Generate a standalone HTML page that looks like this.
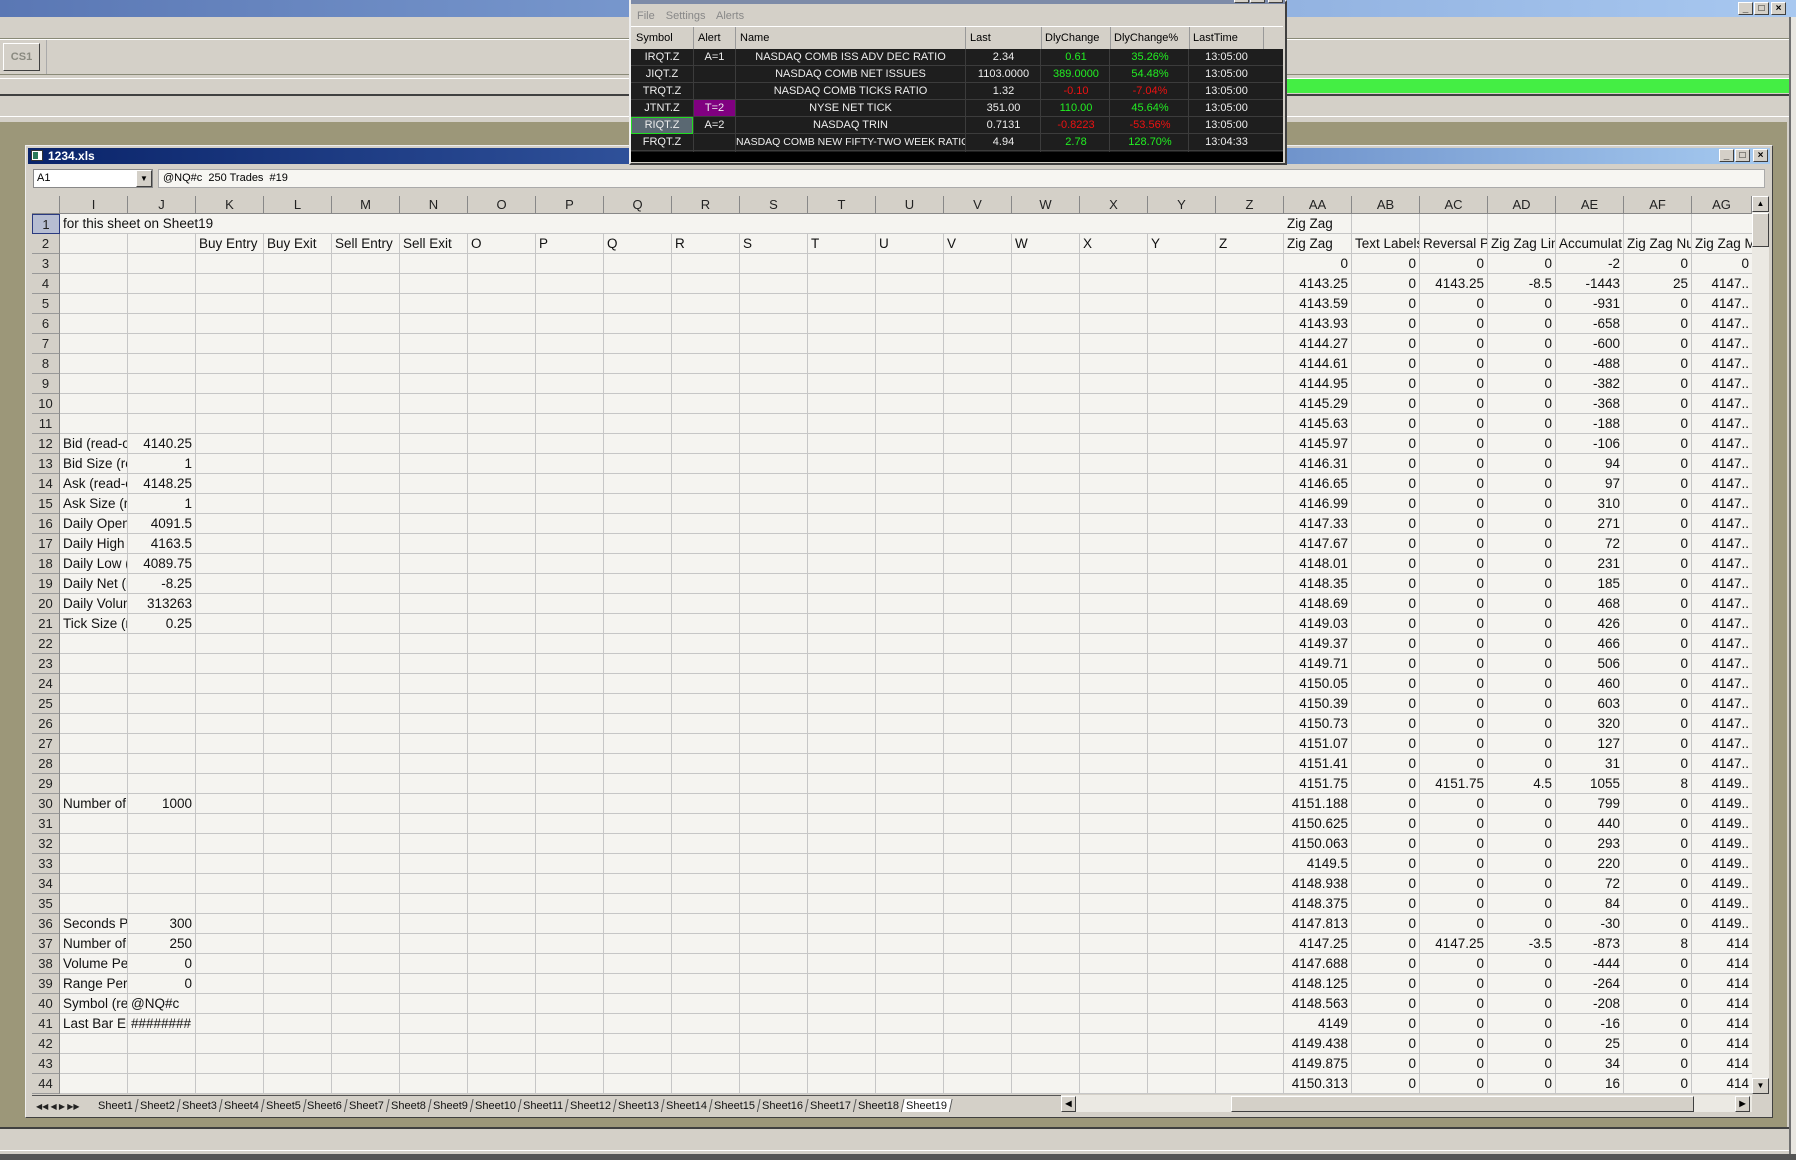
<!DOCTYPE html>
<html><head><meta charset="utf-8"><style>
*{margin:0;padding:0;box-sizing:border-box}
body{width:1796px;height:1160px;position:relative;overflow:hidden;background:#d4d0c8;font-family:"Liberation Sans",sans-serif}
.a{position:absolute}
.ui{font-family:"Liberation Sans",sans-serif;font-size:11px}
.btn3{position:absolute;width:15px;height:13px;background:#d4d0c8;border:1px solid;border-color:#fff #404040 #404040 #fff;font-size:10px;line-height:11px;text-align:center;color:#000;font-weight:bold}
#grid{position:absolute;left:60px;top:214px;width:1692px;height:880px;background-color:#f5f4f0;
background-image:linear-gradient(to right,transparent 67px,#c6c6c6 67px),linear-gradient(to bottom,transparent 19px,#c6c6c6 19px);
background-size:68px 20px,68px 20px;overflow:hidden}
.c{position:absolute;height:20px;line-height:20px;font-size:13.5px;color:#111;padding:0 3px;white-space:nowrap;overflow:hidden;width:67px}
.n{text-align:right}
.ov{overflow:visible;width:auto}
.ch{position:absolute;top:196px;height:18px;width:68px;background:#d4d0c8;border-right:1px solid #888;border-bottom:1px solid #888;text-align:center;font-size:13px;line-height:18px;color:#222}
.rh{position:absolute;left:32px;width:28px;height:20px;background:#d4d0c8;border-bottom:1px solid #999;border-right:1px solid #888;text-align:center;font-size:13px;line-height:20px;color:#222}
.tab{display:inline-block;font-size:11px;line-height:15px;padding:0 3px;border-right:1px solid #555;color:#111;transform:skewX(-12deg)}
.tab span{display:inline-block;transform:skewX(12deg)}
.q{position:absolute;height:17px;line-height:17px;font-size:11px;color:#eee;text-align:center;white-space:nowrap;overflow:hidden}
.g{color:#22ee22}.rd{color:#ee1111}
</style></head><body>
<!-- top desktop title bar -->
<div class="a" style="left:0;top:0;width:1796px;height:17px;background:linear-gradient(to right,#5a77b4,#7b9bd0 40%,#a8c8f0)"></div>
<div class="btn3" style="left:1738px;top:2px">_</div>
<div class="btn3" style="left:1754px;top:2px">□</div>
<div class="btn3" style="left:1771px;top:2px">×</div>
<div class="a" style="left:0;top:38px;width:1789px;height:1px;background:#8a8a78"></div>
<div class="a" style="left:0;top:39px;width:1789px;height:1px;background:#fff"></div>
<div class="a" style="left:3px;top:43px;width:37px;height:28px;border:1px solid;border-color:#fff #404040 #404040 #fff;background:#d4d0c8;font-size:11px;font-weight:bold;color:#8a8a80;text-align:center;line-height:26px">CS1</div>
<div class="a" style="left:46px;top:40px;width:1px;height:34px;background:#aaa"></div>
<div class="a" style="left:0;top:74px;width:1789px;height:1px;background:#8a8a78"></div>
<div class="a" style="left:0;top:78px;width:1789px;height:1px;background:#fff"></div>
<div class="a" style="left:1287px;top:79px;width:502px;height:14px;background:#44ee44"></div>
<div class="a" style="left:0;top:94px;width:1789px;height:2px;background:#404040"></div>
<div class="a" style="left:0;top:116px;width:1789px;height:1px;background:#fff"></div>
<div class="a" style="left:0;top:122px;width:1787px;height:1005px;background:#9c9779"></div>
<div class="a" style="left:1789px;top:17px;width:7px;height:1143px;background:#e8e6e0;border-left:2px solid #707070"></div>
<div class="a" style="left:0;top:1127px;width:1789px;height:2px;background:#404040"></div>
<div class="a" style="left:0;top:1150px;width:1789px;height:1px;background:#fff"></div>
<div class="a" style="left:0;top:1154px;width:1796px;height:6px;background:#555"></div>

<!-- excel window -->
<div class="a" style="left:25px;top:145px;width:1748px;height:973px;background:#d4d0c8;border:1px solid;border-color:#eee #404040 #404040 #eee"></div>
<div class="a" style="left:28px;top:148px;width:1742px;height:16px;background:linear-gradient(to right,#0a246a,#3a5ea8 45%,#a6caf0)"></div>
<div class="a" style="left:31px;top:150px;width:12px;height:11px;background:#fff;border:1px solid #333"><div class="a" style="left:1px;top:1px;width:5px;height:7px;background:#2a7a5a"></div></div>
<div class="a" style="left:48px;top:148px;font-size:12px;font-weight:bold;color:#fff;line-height:16px">1234.xls</div>
<div class="btn3" style="left:1719px;top:149px">_</div>
<div class="btn3" style="left:1735px;top:149px">□</div>
<div class="btn3" style="left:1753px;top:149px">×</div>
<div class="a" style="left:33px;top:169px;width:120px;height:19px;background:#fff;border:1px solid #888;font-size:11px;line-height:17px;padding-left:3px">A1</div>
<div class="a" style="left:136px;top:170px;width:16px;height:17px;background:#d4d0c8;border:1px solid;border-color:#fff #404040 #404040 #fff;font-size:8px;text-align:center;line-height:15px">▼</div>
<div class="a" style="left:158px;top:169px;width:1607px;height:19px;background:#f7f6f2;border:1px solid #aaa;font-size:11px;line-height:17px;padding-left:4px">@NQ#c&nbsp; 250 Trades&nbsp; #19</div>

<!-- column headers -->
<div class="a" style="left:32px;top:196px;width:28px;height:18px;background:#d4d0c8;border-right:1px solid #888;border-bottom:1px solid #888"></div>
<div class="ch" style="left:60px">I</div><div class="ch" style="left:128px">J</div><div class="ch" style="left:196px">K</div><div class="ch" style="left:264px">L</div><div class="ch" style="left:332px">M</div><div class="ch" style="left:400px">N</div><div class="ch" style="left:468px">O</div><div class="ch" style="left:536px">P</div><div class="ch" style="left:604px">Q</div><div class="ch" style="left:672px">R</div><div class="ch" style="left:740px">S</div><div class="ch" style="left:808px">T</div><div class="ch" style="left:876px">U</div><div class="ch" style="left:944px">V</div><div class="ch" style="left:1012px">W</div><div class="ch" style="left:1080px">X</div><div class="ch" style="left:1148px">Y</div><div class="ch" style="left:1216px">Z</div><div class="ch" style="left:1284px">AA</div><div class="ch" style="left:1352px">AB</div><div class="ch" style="left:1420px">AC</div><div class="ch" style="left:1488px">AD</div><div class="ch" style="left:1556px">AE</div><div class="ch" style="left:1624px">AF</div><div class="ch" style="left:1692px;width:60px">AG</div>

<!-- row headers -->
<div class="rh" style="top:214px;background:#b6bdd2;border:1px solid #2a3a80">1</div>
<div class="rh" style="top:234px">2</div><div class="rh" style="top:254px">3</div><div class="rh" style="top:274px">4</div><div class="rh" style="top:294px">5</div><div class="rh" style="top:314px">6</div><div class="rh" style="top:334px">7</div><div class="rh" style="top:354px">8</div><div class="rh" style="top:374px">9</div><div class="rh" style="top:394px">10</div><div class="rh" style="top:414px">11</div><div class="rh" style="top:434px">12</div><div class="rh" style="top:454px">13</div><div class="rh" style="top:474px">14</div><div class="rh" style="top:494px">15</div><div class="rh" style="top:514px">16</div><div class="rh" style="top:534px">17</div><div class="rh" style="top:554px">18</div><div class="rh" style="top:574px">19</div><div class="rh" style="top:594px">20</div><div class="rh" style="top:614px">21</div><div class="rh" style="top:634px">22</div><div class="rh" style="top:654px">23</div><div class="rh" style="top:674px">24</div><div class="rh" style="top:694px">25</div><div class="rh" style="top:714px">26</div><div class="rh" style="top:734px">27</div><div class="rh" style="top:754px">28</div><div class="rh" style="top:774px">29</div><div class="rh" style="top:794px">30</div><div class="rh" style="top:814px">31</div><div class="rh" style="top:834px">32</div><div class="rh" style="top:854px">33</div><div class="rh" style="top:874px">34</div><div class="rh" style="top:894px">35</div><div class="rh" style="top:914px">36</div><div class="rh" style="top:934px">37</div><div class="rh" style="top:954px">38</div><div class="rh" style="top:974px">39</div><div class="rh" style="top:994px">40</div><div class="rh" style="top:1014px">41</div><div class="rh" style="top:1034px">42</div><div class="rh" style="top:1054px">43</div><div class="rh" style="top:1074px">44</div>

<div id="grid">
<div class="a" style="left:0;top:0;width:1224px;height:19px;background:#f5f4f0"></div>
<div class="c ov" style="top:0;left:0">for this sheet on Sheet19</div>
<div class="c ov" style="top:0;left:1224px">Zig Zag</div>
<div class="c" style="top:20px;left:136px">Buy Entry</div><div class="c" style="top:20px;left:204px">Buy Exit</div><div class="c" style="top:20px;left:272px">Sell Entry</div><div class="c" style="top:20px;left:340px">Sell Exit</div>
<div class="c" style="top:20px;left:408px">O</div><div class="c" style="top:20px;left:476px">P</div><div class="c" style="top:20px;left:544px">Q</div><div class="c" style="top:20px;left:612px">R</div><div class="c" style="top:20px;left:680px">S</div><div class="c" style="top:20px;left:748px">T</div><div class="c" style="top:20px;left:816px">U</div><div class="c" style="top:20px;left:884px">V</div><div class="c" style="top:20px;left:952px">W</div><div class="c" style="top:20px;left:1020px">X</div><div class="c" style="top:20px;left:1088px">Y</div><div class="c" style="top:20px;left:1156px">Z</div>
<div class="c" style="top:20px;left:1224px">Zig Zag</div><div class="c" style="top:20px;left:1292px">Text Labels</div><div class="c" style="top:20px;left:1360px">Reversal Pr</div><div class="c" style="top:20px;left:1428px">Zig Zag Line</div><div class="c" style="top:20px;left:1496px">Accumulat</div><div class="c" style="top:20px;left:1564px">Zig Zag Nu</div><div class="c" style="top:20px;left:1632px">Zig Zag Ma</div>
<!-- left labels -->
<div class="c" style="top:220px;left:0">Bid (read-only)</div><div class="c n" style="top:220px;left:68px">4140.25</div>
<div class="c" style="top:240px;left:0">Bid Size (read)</div><div class="c n" style="top:240px;left:68px">1</div>
<div class="c" style="top:260px;left:0">Ask (read-only)</div><div class="c n" style="top:260px;left:68px">4148.25</div>
<div class="c" style="top:280px;left:0">Ask Size (read)</div><div class="c n" style="top:280px;left:68px">1</div>
<div class="c" style="top:300px;left:0">Daily Open</div><div class="c n" style="top:300px;left:68px">4091.5</div>
<div class="c" style="top:320px;left:0">Daily High (</div><div class="c n" style="top:320px;left:68px">4163.5</div>
<div class="c" style="top:340px;left:0">Daily Low (r</div><div class="c n" style="top:340px;left:68px">4089.75</div>
<div class="c" style="top:360px;left:0">Daily Net (r</div><div class="c n" style="top:360px;left:68px">-8.25</div>
<div class="c" style="top:380px;left:0">Daily Volume</div><div class="c n" style="top:380px;left:68px">313263</div>
<div class="c" style="top:400px;left:0">Tick Size (r</div><div class="c n" style="top:400px;left:68px">0.25</div>
<div class="c" style="top:580px;left:0">Number of</div><div class="c n" style="top:580px;left:68px">1000</div>
<div class="c" style="top:700px;left:0">Seconds Per</div><div class="c n" style="top:700px;left:68px">300</div>
<div class="c" style="top:720px;left:0">Number of</div><div class="c n" style="top:720px;left:68px">250</div>
<div class="c" style="top:740px;left:0">Volume Per</div><div class="c n" style="top:740px;left:68px">0</div>
<div class="c" style="top:760px;left:0">Range Per</div><div class="c n" style="top:760px;left:68px">0</div>
<div class="c" style="top:780px;left:0">Symbol (read</div><div class="c" style="top:780px;left:68px">@NQ#c</div>
<div class="c" style="top:800px;left:0">Last Bar End</div><div class="c" style="top:800px;left:68px">########</div>
<!-- right data: AA 1224, AB 1292, AC 1360, AD 1428, AE 1496, AF 1564, AG 1632 -->
<div class="c n" style="top:40px;left:1224px">0</div><div class="c n" style="top:40px;left:1292px">0</div><div class="c n" style="top:40px;left:1360px">0</div><div class="c n" style="top:40px;left:1428px">0</div><div class="c n" style="top:40px;left:1496px">-2</div><div class="c n" style="top:40px;left:1564px">0</div><div class="c n" style="top:40px;left:1632px;width:60px">0</div>
<div class="c n" style="top:60px;left:1224px">4143.25</div><div class="c n" style="top:60px;left:1292px">0</div><div class="c n" style="top:60px;left:1360px">4143.25</div><div class="c n" style="top:60px;left:1428px">-8.5</div><div class="c n" style="top:60px;left:1496px">-1443</div><div class="c n" style="top:60px;left:1564px">25</div><div class="c n" style="top:60px;left:1632px;width:60px">4147..</div>
<div class="c n" style="top:80px;left:1224px">4143.59</div><div class="c n" style="top:80px;left:1292px">0</div><div class="c n" style="top:80px;left:1360px">0</div><div class="c n" style="top:80px;left:1428px">0</div><div class="c n" style="top:80px;left:1496px">-931</div><div class="c n" style="top:80px;left:1564px">0</div><div class="c n" style="top:80px;left:1632px;width:60px">4147..</div>
<div class="c n" style="top:100px;left:1224px">4143.93</div><div class="c n" style="top:100px;left:1292px">0</div><div class="c n" style="top:100px;left:1360px">0</div><div class="c n" style="top:100px;left:1428px">0</div><div class="c n" style="top:100px;left:1496px">-658</div><div class="c n" style="top:100px;left:1564px">0</div><div class="c n" style="top:100px;left:1632px;width:60px">4147..</div>
<div class="c n" style="top:120px;left:1224px">4144.27</div><div class="c n" style="top:120px;left:1292px">0</div><div class="c n" style="top:120px;left:1360px">0</div><div class="c n" style="top:120px;left:1428px">0</div><div class="c n" style="top:120px;left:1496px">-600</div><div class="c n" style="top:120px;left:1564px">0</div><div class="c n" style="top:120px;left:1632px;width:60px">4147..</div>
<div class="c n" style="top:140px;left:1224px">4144.61</div><div class="c n" style="top:140px;left:1292px">0</div><div class="c n" style="top:140px;left:1360px">0</div><div class="c n" style="top:140px;left:1428px">0</div><div class="c n" style="top:140px;left:1496px">-488</div><div class="c n" style="top:140px;left:1564px">0</div><div class="c n" style="top:140px;left:1632px;width:60px">4147..</div>
<div class="c n" style="top:160px;left:1224px">4144.95</div><div class="c n" style="top:160px;left:1292px">0</div><div class="c n" style="top:160px;left:1360px">0</div><div class="c n" style="top:160px;left:1428px">0</div><div class="c n" style="top:160px;left:1496px">-382</div><div class="c n" style="top:160px;left:1564px">0</div><div class="c n" style="top:160px;left:1632px;width:60px">4147..</div>
<div class="c n" style="top:180px;left:1224px">4145.29</div><div class="c n" style="top:180px;left:1292px">0</div><div class="c n" style="top:180px;left:1360px">0</div><div class="c n" style="top:180px;left:1428px">0</div><div class="c n" style="top:180px;left:1496px">-368</div><div class="c n" style="top:180px;left:1564px">0</div><div class="c n" style="top:180px;left:1632px;width:60px">4147..</div>
<div class="c n" style="top:200px;left:1224px">4145.63</div><div class="c n" style="top:200px;left:1292px">0</div><div class="c n" style="top:200px;left:1360px">0</div><div class="c n" style="top:200px;left:1428px">0</div><div class="c n" style="top:200px;left:1496px">-188</div><div class="c n" style="top:200px;left:1564px">0</div><div class="c n" style="top:200px;left:1632px;width:60px">4147..</div>
<div class="c n" style="top:220px;left:1224px">4145.97</div><div class="c n" style="top:220px;left:1292px">0</div><div class="c n" style="top:220px;left:1360px">0</div><div class="c n" style="top:220px;left:1428px">0</div><div class="c n" style="top:220px;left:1496px">-106</div><div class="c n" style="top:220px;left:1564px">0</div><div class="c n" style="top:220px;left:1632px;width:60px">4147..</div>
<div class="c n" style="top:240px;left:1224px">4146.31</div><div class="c n" style="top:240px;left:1292px">0</div><div class="c n" style="top:240px;left:1360px">0</div><div class="c n" style="top:240px;left:1428px">0</div><div class="c n" style="top:240px;left:1496px">94</div><div class="c n" style="top:240px;left:1564px">0</div><div class="c n" style="top:240px;left:1632px;width:60px">4147..</div>
<div class="c n" style="top:260px;left:1224px">4146.65</div><div class="c n" style="top:260px;left:1292px">0</div><div class="c n" style="top:260px;left:1360px">0</div><div class="c n" style="top:260px;left:1428px">0</div><div class="c n" style="top:260px;left:1496px">97</div><div class="c n" style="top:260px;left:1564px">0</div><div class="c n" style="top:260px;left:1632px;width:60px">4147..</div>
<div class="c n" style="top:280px;left:1224px">4146.99</div><div class="c n" style="top:280px;left:1292px">0</div><div class="c n" style="top:280px;left:1360px">0</div><div class="c n" style="top:280px;left:1428px">0</div><div class="c n" style="top:280px;left:1496px">310</div><div class="c n" style="top:280px;left:1564px">0</div><div class="c n" style="top:280px;left:1632px;width:60px">4147..</div>
<div class="c n" style="top:300px;left:1224px">4147.33</div><div class="c n" style="top:300px;left:1292px">0</div><div class="c n" style="top:300px;left:1360px">0</div><div class="c n" style="top:300px;left:1428px">0</div><div class="c n" style="top:300px;left:1496px">271</div><div class="c n" style="top:300px;left:1564px">0</div><div class="c n" style="top:300px;left:1632px;width:60px">4147..</div>
<div class="c n" style="top:320px;left:1224px">4147.67</div><div class="c n" style="top:320px;left:1292px">0</div><div class="c n" style="top:320px;left:1360px">0</div><div class="c n" style="top:320px;left:1428px">0</div><div class="c n" style="top:320px;left:1496px">72</div><div class="c n" style="top:320px;left:1564px">0</div><div class="c n" style="top:320px;left:1632px;width:60px">4147..</div>
<div class="c n" style="top:340px;left:1224px">4148.01</div><div class="c n" style="top:340px;left:1292px">0</div><div class="c n" style="top:340px;left:1360px">0</div><div class="c n" style="top:340px;left:1428px">0</div><div class="c n" style="top:340px;left:1496px">231</div><div class="c n" style="top:340px;left:1564px">0</div><div class="c n" style="top:340px;left:1632px;width:60px">4147..</div>
<div class="c n" style="top:360px;left:1224px">4148.35</div><div class="c n" style="top:360px;left:1292px">0</div><div class="c n" style="top:360px;left:1360px">0</div><div class="c n" style="top:360px;left:1428px">0</div><div class="c n" style="top:360px;left:1496px">185</div><div class="c n" style="top:360px;left:1564px">0</div><div class="c n" style="top:360px;left:1632px;width:60px">4147..</div>
<div class="c n" style="top:380px;left:1224px">4148.69</div><div class="c n" style="top:380px;left:1292px">0</div><div class="c n" style="top:380px;left:1360px">0</div><div class="c n" style="top:380px;left:1428px">0</div><div class="c n" style="top:380px;left:1496px">468</div><div class="c n" style="top:380px;left:1564px">0</div><div class="c n" style="top:380px;left:1632px;width:60px">4147..</div>
<div class="c n" style="top:400px;left:1224px">4149.03</div><div class="c n" style="top:400px;left:1292px">0</div><div class="c n" style="top:400px;left:1360px">0</div><div class="c n" style="top:400px;left:1428px">0</div><div class="c n" style="top:400px;left:1496px">426</div><div class="c n" style="top:400px;left:1564px">0</div><div class="c n" style="top:400px;left:1632px;width:60px">4147..</div>
<div class="c n" style="top:420px;left:1224px">4149.37</div><div class="c n" style="top:420px;left:1292px">0</div><div class="c n" style="top:420px;left:1360px">0</div><div class="c n" style="top:420px;left:1428px">0</div><div class="c n" style="top:420px;left:1496px">466</div><div class="c n" style="top:420px;left:1564px">0</div><div class="c n" style="top:420px;left:1632px;width:60px">4147..</div>
<div class="c n" style="top:440px;left:1224px">4149.71</div><div class="c n" style="top:440px;left:1292px">0</div><div class="c n" style="top:440px;left:1360px">0</div><div class="c n" style="top:440px;left:1428px">0</div><div class="c n" style="top:440px;left:1496px">506</div><div class="c n" style="top:440px;left:1564px">0</div><div class="c n" style="top:440px;left:1632px;width:60px">4147..</div>
<div class="c n" style="top:460px;left:1224px">4150.05</div><div class="c n" style="top:460px;left:1292px">0</div><div class="c n" style="top:460px;left:1360px">0</div><div class="c n" style="top:460px;left:1428px">0</div><div class="c n" style="top:460px;left:1496px">460</div><div class="c n" style="top:460px;left:1564px">0</div><div class="c n" style="top:460px;left:1632px;width:60px">4147..</div>
<div class="c n" style="top:480px;left:1224px">4150.39</div><div class="c n" style="top:480px;left:1292px">0</div><div class="c n" style="top:480px;left:1360px">0</div><div class="c n" style="top:480px;left:1428px">0</div><div class="c n" style="top:480px;left:1496px">603</div><div class="c n" style="top:480px;left:1564px">0</div><div class="c n" style="top:480px;left:1632px;width:60px">4147..</div>
<div class="c n" style="top:500px;left:1224px">4150.73</div><div class="c n" style="top:500px;left:1292px">0</div><div class="c n" style="top:500px;left:1360px">0</div><div class="c n" style="top:500px;left:1428px">0</div><div class="c n" style="top:500px;left:1496px">320</div><div class="c n" style="top:500px;left:1564px">0</div><div class="c n" style="top:500px;left:1632px;width:60px">4147..</div>
<div class="c n" style="top:520px;left:1224px">4151.07</div><div class="c n" style="top:520px;left:1292px">0</div><div class="c n" style="top:520px;left:1360px">0</div><div class="c n" style="top:520px;left:1428px">0</div><div class="c n" style="top:520px;left:1496px">127</div><div class="c n" style="top:520px;left:1564px">0</div><div class="c n" style="top:520px;left:1632px;width:60px">4147..</div>
<div class="c n" style="top:540px;left:1224px">4151.41</div><div class="c n" style="top:540px;left:1292px">0</div><div class="c n" style="top:540px;left:1360px">0</div><div class="c n" style="top:540px;left:1428px">0</div><div class="c n" style="top:540px;left:1496px">31</div><div class="c n" style="top:540px;left:1564px">0</div><div class="c n" style="top:540px;left:1632px;width:60px">4147..</div>
<div class="c n" style="top:560px;left:1224px">4151.75</div><div class="c n" style="top:560px;left:1292px">0</div><div class="c n" style="top:560px;left:1360px">4151.75</div><div class="c n" style="top:560px;left:1428px">4.5</div><div class="c n" style="top:560px;left:1496px">1055</div><div class="c n" style="top:560px;left:1564px">8</div><div class="c n" style="top:560px;left:1632px;width:60px">4149..</div>
<div class="c n" style="top:580px;left:1224px">4151.188</div><div class="c n" style="top:580px;left:1292px">0</div><div class="c n" style="top:580px;left:1360px">0</div><div class="c n" style="top:580px;left:1428px">0</div><div class="c n" style="top:580px;left:1496px">799</div><div class="c n" style="top:580px;left:1564px">0</div><div class="c n" style="top:580px;left:1632px;width:60px">4149..</div>
<div class="c n" style="top:600px;left:1224px">4150.625</div><div class="c n" style="top:600px;left:1292px">0</div><div class="c n" style="top:600px;left:1360px">0</div><div class="c n" style="top:600px;left:1428px">0</div><div class="c n" style="top:600px;left:1496px">440</div><div class="c n" style="top:600px;left:1564px">0</div><div class="c n" style="top:600px;left:1632px;width:60px">4149..</div>
<div class="c n" style="top:620px;left:1224px">4150.063</div><div class="c n" style="top:620px;left:1292px">0</div><div class="c n" style="top:620px;left:1360px">0</div><div class="c n" style="top:620px;left:1428px">0</div><div class="c n" style="top:620px;left:1496px">293</div><div class="c n" style="top:620px;left:1564px">0</div><div class="c n" style="top:620px;left:1632px;width:60px">4149..</div>
<div class="c n" style="top:640px;left:1224px">4149.5</div><div class="c n" style="top:640px;left:1292px">0</div><div class="c n" style="top:640px;left:1360px">0</div><div class="c n" style="top:640px;left:1428px">0</div><div class="c n" style="top:640px;left:1496px">220</div><div class="c n" style="top:640px;left:1564px">0</div><div class="c n" style="top:640px;left:1632px;width:60px">4149..</div>
<div class="c n" style="top:660px;left:1224px">4148.938</div><div class="c n" style="top:660px;left:1292px">0</div><div class="c n" style="top:660px;left:1360px">0</div><div class="c n" style="top:660px;left:1428px">0</div><div class="c n" style="top:660px;left:1496px">72</div><div class="c n" style="top:660px;left:1564px">0</div><div class="c n" style="top:660px;left:1632px;width:60px">4149..</div>
<div class="c n" style="top:680px;left:1224px">4148.375</div><div class="c n" style="top:680px;left:1292px">0</div><div class="c n" style="top:680px;left:1360px">0</div><div class="c n" style="top:680px;left:1428px">0</div><div class="c n" style="top:680px;left:1496px">84</div><div class="c n" style="top:680px;left:1564px">0</div><div class="c n" style="top:680px;left:1632px;width:60px">4149..</div>
<div class="c n" style="top:700px;left:1224px">4147.813</div><div class="c n" style="top:700px;left:1292px">0</div><div class="c n" style="top:700px;left:1360px">0</div><div class="c n" style="top:700px;left:1428px">0</div><div class="c n" style="top:700px;left:1496px">-30</div><div class="c n" style="top:700px;left:1564px">0</div><div class="c n" style="top:700px;left:1632px;width:60px">4149..</div>
<div class="c n" style="top:720px;left:1224px">4147.25</div><div class="c n" style="top:720px;left:1292px">0</div><div class="c n" style="top:720px;left:1360px">4147.25</div><div class="c n" style="top:720px;left:1428px">-3.5</div><div class="c n" style="top:720px;left:1496px">-873</div><div class="c n" style="top:720px;left:1564px">8</div><div class="c n" style="top:720px;left:1632px;width:60px">414</div>
<div class="c n" style="top:740px;left:1224px">4147.688</div><div class="c n" style="top:740px;left:1292px">0</div><div class="c n" style="top:740px;left:1360px">0</div><div class="c n" style="top:740px;left:1428px">0</div><div class="c n" style="top:740px;left:1496px">-444</div><div class="c n" style="top:740px;left:1564px">0</div><div class="c n" style="top:740px;left:1632px;width:60px">414</div>
<div class="c n" style="top:760px;left:1224px">4148.125</div><div class="c n" style="top:760px;left:1292px">0</div><div class="c n" style="top:760px;left:1360px">0</div><div class="c n" style="top:760px;left:1428px">0</div><div class="c n" style="top:760px;left:1496px">-264</div><div class="c n" style="top:760px;left:1564px">0</div><div class="c n" style="top:760px;left:1632px;width:60px">414</div>
<div class="c n" style="top:780px;left:1224px">4148.563</div><div class="c n" style="top:780px;left:1292px">0</div><div class="c n" style="top:780px;left:1360px">0</div><div class="c n" style="top:780px;left:1428px">0</div><div class="c n" style="top:780px;left:1496px">-208</div><div class="c n" style="top:780px;left:1564px">0</div><div class="c n" style="top:780px;left:1632px;width:60px">414</div>
<div class="c n" style="top:800px;left:1224px">4149</div><div class="c n" style="top:800px;left:1292px">0</div><div class="c n" style="top:800px;left:1360px">0</div><div class="c n" style="top:800px;left:1428px">0</div><div class="c n" style="top:800px;left:1496px">-16</div><div class="c n" style="top:800px;left:1564px">0</div><div class="c n" style="top:800px;left:1632px;width:60px">414</div>
<div class="c n" style="top:820px;left:1224px">4149.438</div><div class="c n" style="top:820px;left:1292px">0</div><div class="c n" style="top:820px;left:1360px">0</div><div class="c n" style="top:820px;left:1428px">0</div><div class="c n" style="top:820px;left:1496px">25</div><div class="c n" style="top:820px;left:1564px">0</div><div class="c n" style="top:820px;left:1632px;width:60px">414</div>
<div class="c n" style="top:840px;left:1224px">4149.875</div><div class="c n" style="top:840px;left:1292px">0</div><div class="c n" style="top:840px;left:1360px">0</div><div class="c n" style="top:840px;left:1428px">0</div><div class="c n" style="top:840px;left:1496px">34</div><div class="c n" style="top:840px;left:1564px">0</div><div class="c n" style="top:840px;left:1632px;width:60px">414</div>
<div class="c n" style="top:860px;left:1224px">4150.313</div><div class="c n" style="top:860px;left:1292px">0</div><div class="c n" style="top:860px;left:1360px">0</div><div class="c n" style="top:860px;left:1428px">0</div><div class="c n" style="top:860px;left:1496px">16</div><div class="c n" style="top:860px;left:1564px">0</div><div class="c n" style="top:860px;left:1632px;width:60px">414</div>
</div>
<!-- vertical scrollbar -->
<div class="a" style="left:1752px;top:196px;width:17px;height:898px;background:#ebe9e3"></div>
<div class="btn3" style="left:1752px;top:196px;width:17px;height:16px;font-size:8px;line-height:13px">▲</div>
<div class="a" style="left:1752px;top:213px;width:17px;height:34px;background:#d4d0c8;border:1px solid;border-color:#fff #404040 #404040 #fff"></div>
<div class="btn3" style="left:1752px;top:1078px;width:17px;height:16px;font-size:8px;line-height:13px">▼</div>
<!-- sheet tabs -->
<div class="a" style="left:32px;top:1095px;width:1034px;height:17px;background:#d4d0c8;border-top:1px solid #555;white-space:nowrap;overflow:hidden">
<span style="display:inline-block;width:63px;font-size:8px;line-height:15px;padding-left:4px;color:#222">&#9664;&#9664; &#9664; &#9654; &#9654;&#9654;</span><span class="tab"><span>Sheet1</span></span><span class="tab"><span>Sheet2</span></span><span class="tab"><span>Sheet3</span></span><span class="tab"><span>Sheet4</span></span><span class="tab"><span>Sheet5</span></span><span class="tab"><span>Sheet6</span></span><span class="tab"><span>Sheet7</span></span><span class="tab"><span>Sheet8</span></span><span class="tab"><span>Sheet9</span></span><span class="tab"><span>Sheet10</span></span><span class="tab"><span>Sheet11</span></span><span class="tab"><span>Sheet12</span></span><span class="tab"><span>Sheet13</span></span><span class="tab"><span>Sheet14</span></span><span class="tab"><span>Sheet15</span></span><span class="tab"><span>Sheet16</span></span><span class="tab"><span>Sheet17</span></span><span class="tab"><span>Sheet18</span></span><span class="tab" style="background:#fff"><span>Sheet19</span></span>
</div>
<div class="a" style="left:1061px;top:1095px;width:691px;height:17px;background:#ebe9e3"></div>
<div class="btn3" style="left:1061px;top:1096px;height:16px;font-size:8px;line-height:13px">◀</div>
<div class="a" style="left:1231px;top:1096px;width:463px;height:16px;background:#d4d0c8;border:1px solid;border-color:#fff #404040 #404040 #fff"></div>
<div class="btn3" style="left:1735px;top:1096px;height:16px;font-size:8px;line-height:13px">▶</div>

<!-- quote window -->
<div class="a" style="left:629px;top:0;width:658px;height:165px;background:#d4d0c8;border:2px solid;border-color:#eee #404040 #404040 #eee"></div>
<div class="a" style="left:631px;top:0;width:654px;height:4px;background:#7d8ba8"></div>
<div class="btn3" style="left:1234px;top:-9px;height:12px"></div><div class="btn3" style="left:1250px;top:-9px;height:12px"></div><div class="btn3" style="left:1268px;top:-9px;height:12px"></div>
<div class="a ui" style="left:637px;top:9px;color:#888;line-height:14px;word-spacing:8px">File Settings Alerts</div>
<div class="a" style="left:631px;top:26px;width:652px;height:1px;background:#fff"></div>
<div class="a" style="left:631px;top:27px;width:652px;height:22px;background:#d4d0c8"></div>
<div class="a ui" style="left:636px;top:31px;line-height:14px">Symbol</div>
<div class="a ui" style="left:698px;top:31px;line-height:14px">Alert</div>
<div class="a ui" style="left:740px;top:31px;line-height:14px">Name</div>
<div class="a ui" style="left:970px;top:31px;line-height:14px">Last</div>
<div class="a ui" style="left:1045px;top:31px;line-height:14px">DlyChange</div>
<div class="a ui" style="left:1114px;top:31px;line-height:14px">DlyChange%</div>
<div class="a ui" style="left:1193px;top:31px;line-height:14px">LastTime</div>
<div class="a" style="left:693px;top:27px;width:1px;height:22px;background:#999"></div><div class="a" style="left:735px;top:27px;width:1px;height:22px;background:#999"></div><div class="a" style="left:965px;top:27px;width:1px;height:22px;background:#999"></div><div class="a" style="left:1041px;top:27px;width:1px;height:22px;background:#999"></div><div class="a" style="left:1110px;top:27px;width:1px;height:22px;background:#999"></div><div class="a" style="left:1189px;top:27px;width:1px;height:22px;background:#999"></div><div class="a" style="left:1263px;top:27px;width:1px;height:22px;background:#999"></div>
<div class="a" style="left:631px;top:49px;width:652px;height:113px;background:#000"></div>
<div class="a" style="left:631px;top:49px;width:652px;height:103px;background:#1e1e1e;
background-image:linear-gradient(to bottom,transparent 16px,#3c3c3c 16px),linear-gradient(to right,transparent 62px,#3c3c3c 62px,#3c3c3c 63px,transparent 63px,transparent 104px,#3c3c3c 104px,#3c3c3c 105px,transparent 105px,transparent 334px,#3c3c3c 334px,#3c3c3c 335px,transparent 335px,transparent 409px,#3c3c3c 409px,#3c3c3c 410px,transparent 410px,transparent 478px,#3c3c3c 478px,#3c3c3c 479px,transparent 479px,transparent 557px,#3c3c3c 557px,#3c3c3c 558px,transparent 558px);background-size:652px 17px,652px 103px;background-repeat:repeat-y,no-repeat"></div>
<div class="a" style="left:694px;top:100px;width:41px;height:16px;background:#800080"></div>
<div class="a" style="left:631px;top:117px;width:62px;height:17px;background:#5a6872;border:1px solid #22dd22"></div>
<div class="q" style="left:631px;top:49px;width:62px">IRQT.Z</div><div class="q" style="left:694px;top:49px;width:41px">A=1</div><div class="q" style="left:736px;top:49px;width:229px">NASDAQ COMB ISS ADV DEC RATIO</div><div class="q" style="left:966px;top:49px;width:75px">2.34</div><div class="q g" style="left:1042px;top:49px;width:68px">0.61</div><div class="q g" style="left:1111px;top:49px;width:78px">35.26%</div><div class="q" style="left:1190px;top:49px;width:73px">13:05:00</div>
<div class="q" style="left:631px;top:66px;width:62px">JIQT.Z</div><div class="q" style="left:736px;top:66px;width:229px">NASDAQ COMB NET ISSUES</div><div class="q" style="left:966px;top:66px;width:75px">1103.0000</div><div class="q g" style="left:1042px;top:66px;width:68px">389.0000</div><div class="q g" style="left:1111px;top:66px;width:78px">54.48%</div><div class="q" style="left:1190px;top:66px;width:73px">13:05:00</div>
<div class="q" style="left:631px;top:83px;width:62px">TRQT.Z</div><div class="q" style="left:736px;top:83px;width:229px">NASDAQ COMB TICKS RATIO</div><div class="q" style="left:966px;top:83px;width:75px">1.32</div><div class="q rd" style="left:1042px;top:83px;width:68px">-0.10</div><div class="q rd" style="left:1111px;top:83px;width:78px">-7.04%</div><div class="q" style="left:1190px;top:83px;width:73px">13:05:00</div>
<div class="q" style="left:631px;top:100px;width:62px">JTNT.Z</div><div class="q" style="left:694px;top:100px;width:41px">T=2</div><div class="q" style="left:736px;top:100px;width:229px">NYSE NET TICK</div><div class="q" style="left:966px;top:100px;width:75px">351.00</div><div class="q g" style="left:1042px;top:100px;width:68px">110.00</div><div class="q g" style="left:1111px;top:100px;width:78px">45.64%</div><div class="q" style="left:1190px;top:100px;width:73px">13:05:00</div>
<div class="q" style="left:631px;top:117px;width:62px">RIQT.Z</div><div class="q" style="left:694px;top:117px;width:41px">A=2</div><div class="q" style="left:736px;top:117px;width:229px">NASDAQ TRIN</div><div class="q" style="left:966px;top:117px;width:75px">0.7131</div><div class="q rd" style="left:1042px;top:117px;width:68px">-0.8223</div><div class="q rd" style="left:1111px;top:117px;width:78px">-53.56%</div><div class="q" style="left:1190px;top:117px;width:73px">13:05:00</div>
<div class="q" style="left:631px;top:134px;width:62px">FRQT.Z</div><div class="q" style="left:736px;top:134px;width:229px;font-size:10.5px">NASDAQ COMB NEW FIFTY-TWO WEEK RATIO</div><div class="q" style="left:966px;top:134px;width:75px">4.94</div><div class="q g" style="left:1042px;top:134px;width:68px">2.78</div><div class="q g" style="left:1111px;top:134px;width:78px">128.70%</div><div class="q" style="left:1190px;top:134px;width:73px">13:04:33</div>
</body></html>
